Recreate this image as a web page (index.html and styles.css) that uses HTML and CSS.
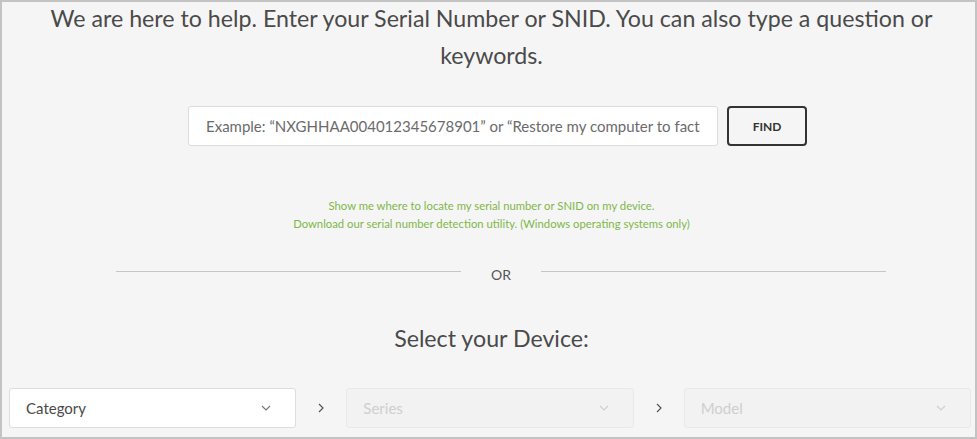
FILE: index.html
```html
<!DOCTYPE html>
<html lang="en">
<head>
<meta charset="UTF-8" />
<title>Support - Find your device</title>
<link rel="stylesheet" href="styles.css">
</head>
<body>

<main class="support">
  <h1 class="intro">We are here to help. Enter your Serial Number or SNID. You can also type a question or keywords.</h1>

  <!-- Serial number / keyword search -->
  <form class="search" onsubmit="return false;">
    <input class="search-input" type="text" placeholder="Example: “NXGHHAA004012345678901” or “Restore my computer to factory settings”" />
    <button class="search-btn" type="submit">FIND</button>
  </form>

  <div class="help-links">
    <a href="#">Show me where to locate my serial number or SNID on my device.</a>
    <a href="#">Download our serial number detection utility. (Windows operating systems only)</a>
  </div>

  <div class="divider"><span>OR</span></div>

  <h2 class="device-title">Select your Device:</h2>

  <!-- Category > Series > Model pickers -->
  <div class="device-row">
    <div class="picker">
      <span>Category</span>
      <svg class="caret" width="10" height="6" viewBox="0 0 10 6"><path d="M1 1l4 4 4-4" fill="none" stroke="currentColor" stroke-width="1.2"/></svg>
    </div>
    <span class="step">
      <svg width="6" height="10" viewBox="0 0 6 10"><path d="M1 1l4 4-4 4" fill="none" stroke="currentColor" stroke-width="1.2"/></svg>
    </span>
    <div class="picker disabled">
      <span>Series</span>
      <svg class="caret" width="10" height="6" viewBox="0 0 10 6"><path d="M1 1l4 4 4-4" fill="none" stroke="currentColor" stroke-width="1.2"/></svg>
    </div>
    <span class="step">
      <svg width="6" height="10" viewBox="0 0 6 10"><path d="M1 1l4 4-4 4" fill="none" stroke="currentColor" stroke-width="1.2"/></svg>
    </span>
    <div class="picker disabled">
      <span>Model</span>
      <svg class="caret" width="10" height="6" viewBox="0 0 10 6"><path d="M1 1l4 4 4-4" fill="none" stroke="currentColor" stroke-width="1.2"/></svg>
    </div>
  </div>
</main>

</body>
</html>
```

FILE: styles.css
```css
html, body {
  height: 100%;
}
body {
  margin: 0;
  background: #f5f5f5;
  border: 2px solid #c3c3c3;
  box-sizing: border-box;
  overflow: hidden;
  font-family: Lato, "Noto Sans", sans-serif;
  color: #4a4a4a;
}
.intro {
  margin: -2px auto 0;
  max-width: 900px;
  font-size: 23.2px;
  font-weight: normal;
  line-height: 37px;
  text-align: center;
  padding-left: 6px;
}
.search {
  display: flex;
  justify-content: center;
  gap: 9px;
  margin-top: 32px;
  padding-left: 18px;
}
.search-input {
  width: 530px;
  height: 40px;
  box-sizing: border-box;
  padding: 0 17px;
  border: 1px solid #dcdcdc;
  border-radius: 3px;
  background: #fff;
  font-family: inherit;
  font-size: 15px;
  color: #333;
}
.search-input::placeholder {
  color: #6b6b6b;
}
.search-input:focus {
  outline: none;
  border-color: #aaa;
}
.search-btn {
  width: 80px;
  height: 40px;
  border: 2px solid #333;
  border-radius: 4px;
  background: transparent;
  font-family: inherit;
  font-size: 12px;
  font-weight: bold;
  color: #333;
  cursor: pointer;
}
.help-links {
  margin-top: 51px;
  text-align: center;
  font-size: 11.3px;
  line-height: 18px;
  padding-left: 6px;
}
.help-links a {
  display: block;
  color: #80b74a;
  text-decoration: none;
}
.divider {
  display: flex;
  align-items: center;
  gap: 30px;
  margin: 30px 89px 0 114px;
  font-size: 14px;
  color: #555;
}
.divider::before,
.divider::after {
  content: "";
  flex: 1;
  border-top: 1px solid #c6c6c6;
}
.divider span {
  position: relative;
  top: 3px;
}
.device-title {
  margin: 44px 0 0;
  font-size: 23.2px;
  font-weight: normal;
  text-align: center;
  padding-left: 6px;
}
.device-row {
  display: flex;
  align-items: center;
  margin-top: 36px;
  padding: 0 4px 0 7px;
}
.picker {
  flex: 1;
  height: 40px;
  box-sizing: border-box;
  display: flex;
  align-items: center;
  justify-content: space-between;
  padding: 0 24px 0 16px;
  background: #fff;
  border: 1px solid #dedede;
  border-radius: 3px;
  font-size: 15px;
  color: #4a4a4a;
}
.picker .caret {
  color: #777;
}
.picker.disabled {
  background: #f2f2f2;
  border-color: #e9e9e9;
  color: #cfcfcf;
}
.picker.disabled .caret {
  color: #d0d0d0;
}
.step {
  width: 50px;
  display: flex;
  justify-content: center;
  color: #555;
}
```
